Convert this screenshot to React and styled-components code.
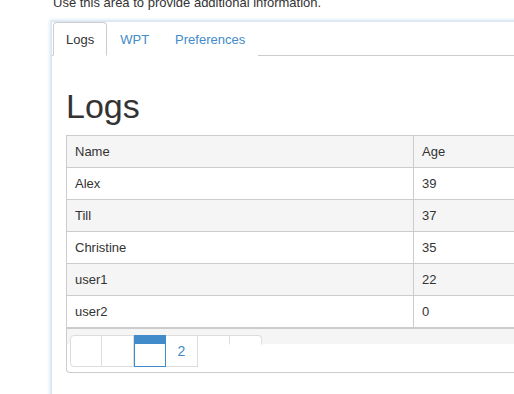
import React from 'react'
import styled, {createGlobalStyle} from 'styled-components'

const GlobalStyle = createGlobalStyle`
  html, body {
    margin: 0;
    padding: 0;
    background: #fff;
    overflow: hidden;
  }
  body {
    font-family: "Liberation Sans", Arial, sans-serif;
    font-size: 13px;
    color: #333;
  }
`

const Page = styled.div`
  width: 514px;
  height: 394px;
  overflow: hidden;
`

const Info = styled.p`
  margin: -6px 0 0 53px;
  line-height: 18px;
  font-size: 13px;
  color: #333;
`

const Panel = styled.div`
  margin: 9px 0 0 51px;
  width: 600px;
  height: 420px;
  border-left: 1px solid #dbe6f1;
  border-top: 1px solid #dbe6f1;
  box-shadow: -1px -1px 3px rgba(66, 139, 202, 0.25);
  box-sizing: border-box;
`

const Tabs = styled.ul`
  display: flex;
  list-style: none;
  margin: 0;
  padding: 0 0 0 1px;
  border-bottom: 1px solid #ccc;
`

const Tab = styled.li`
  margin-bottom: -1px;
  padding: 10px 12px 9px;
  line-height: 13px;
  border: 1px solid ${(p) => (p.active ? '#ccc' : 'transparent')};
  border-bottom-color: ${(p) => (p.active ? '#fff' : 'transparent')};
  border-radius: 4px 4px 0 0;
  background: #fff;
  color: ${(p) => (p.active ? '#333' : '#428bca')};
`

const Content = styled.div`
  padding: 0 0 0 14px;
`

const Heading = styled.h1`
  margin: 31px 0 10px;
  font-size: 34px;
  font-weight: 400;
  line-height: 38px;
  color: #333;
`

const Table = styled.table`
  width: 540px;
  border-collapse: collapse;
  border: 1px solid #ccc;
  border-bottom: 2px solid #ccc;
`

const Row = styled.tr`
  background: ${(p) => (p.striped ? '#f5f5f5' : '#fff')};
`

const Cell = styled.td`
  height: 32px;
  padding: 0 8px;
  border-top: 1px solid #ccc;
  border-left: 1px solid #ccc;
  box-sizing: border-box;
  width: ${(p) => p.w || 'auto'};
  &:first-child {
    border-left: none;
  }
`

const Footer = styled.div`
  width: 540px;
  height: 44px;
  border: 1px solid #ccc;
  border-top: none;
  border-radius: 0 0 0 4px;
  background: linear-gradient(#f5f5f5 0, #f5f5f5 15px, #fff 15px);
  box-sizing: border-box;
  padding: 6px 0 0 3px;
`

const Pager = styled.ul`
  display: flex;
  align-items: flex-start;
  list-style: none;
  margin: 0;
  padding: 0;
`

const PageItem = styled.li`
  width: 32px;
  height: ${(p) => (p.open ? '10px' : '32px')};
  box-sizing: border-box;
  border: 1px solid ${(p) => (p.active ? '#428bca' : '#ddd')};
  border-left: ${(p) => (p.active ? '1px solid #428bca' : 'none')};
  border-bottom-color: ${(p) => (p.open ? 'transparent' : p.active ? '#428bca' : '#ddd')};
  background: ${(p) =>
    p.active ? 'linear-gradient(#428bca 0, #428bca 8px, #fff 8px)' : '#fff'};
  color: #428bca;
  font-size: 14px;
  display: flex;
  align-items: center;
  justify-content: center;
  padding-top: 1px;
  &:first-child {
    border-left: 1px solid #ddd;
    border-radius: 4px 0 0 4px;
  }
  &:last-child {
    border-radius: 0 4px 0 0;
  }
`

const rows = [
  ['Alex', 39],
  ['Till', 37],
  ['Christine', 35],
  ['user1', 22],
  ['user2', 0],
]

export default function App() {
  return (
    <Page>
      <GlobalStyle />
      <Info>Use this area to provide additional information.</Info>
      <Panel>
        <Tabs>
          <Tab active>Logs</Tab>
          <Tab>WPT</Tab>
          <Tab>Preferences</Tab>
        </Tabs>
        <Content>
          <Heading>Logs</Heading>
          <Table>
            <tbody>
              <Row striped>
                <Cell w="347px">Name</Cell>
                <Cell>Age</Cell>
              </Row>
              {rows.map(([name, age], i) => (
                <Row key={name} striped={i % 2 === 1}>
                  <Cell>{name}</Cell>
                  <Cell>{age}</Cell>
                </Row>
              ))}
            </tbody>
          </Table>
          <Footer>
            <Pager>
              <PageItem />
              <PageItem />
              <PageItem active />
              <PageItem>2</PageItem>
              <PageItem open />
              <PageItem open />
            </Pager>
          </Footer>
        </Content>
      </Panel>
    </Page>
  )
}
